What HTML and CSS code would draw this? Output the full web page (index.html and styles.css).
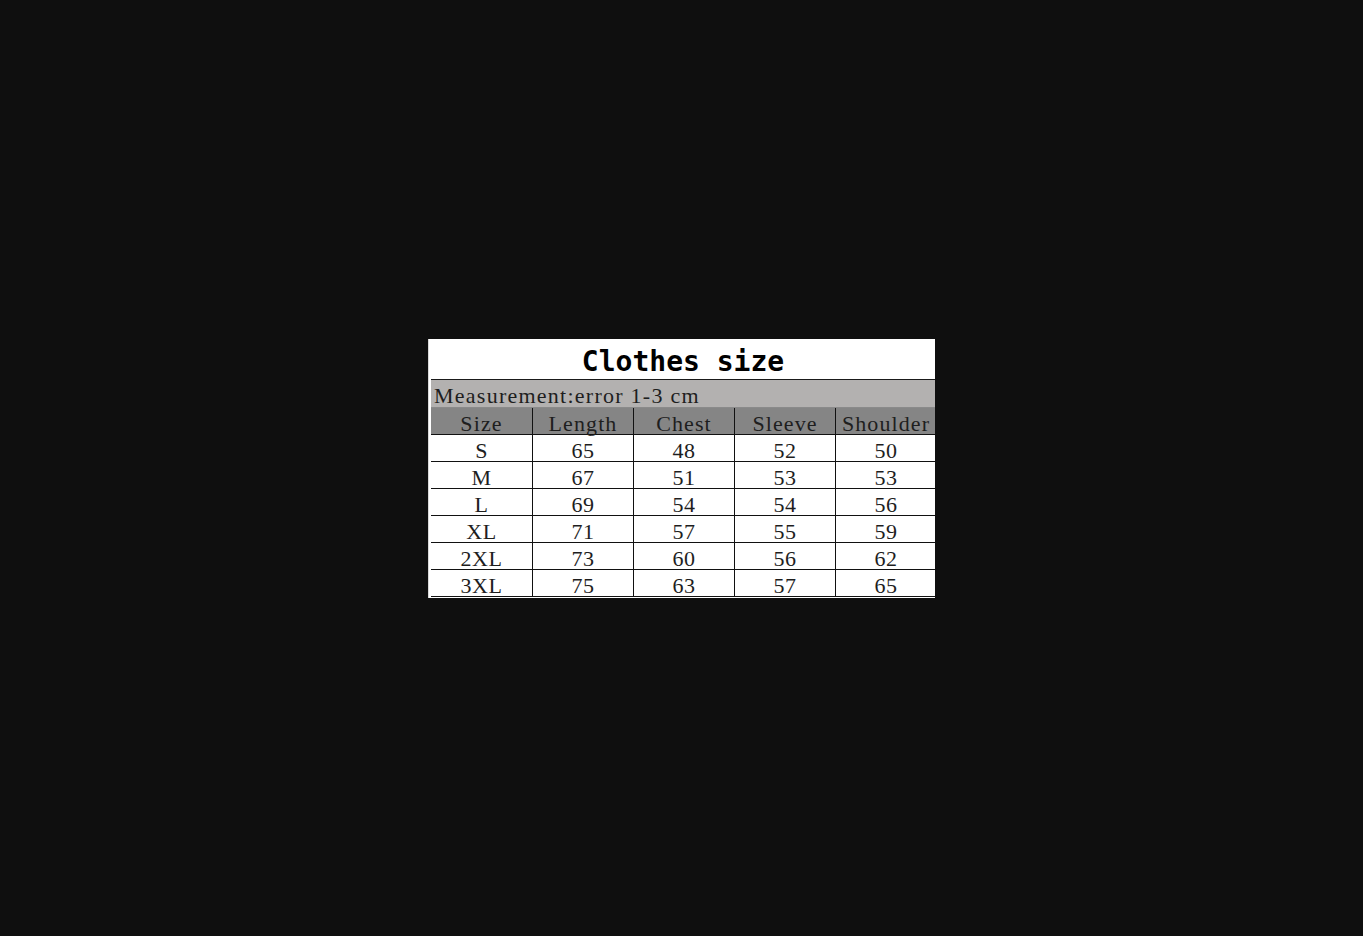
FILE: index.html
```html
<!DOCTYPE html>
<html lang="en">
<head>
<meta charset="utf-8">
<title>Clothes size</title>
<link rel="stylesheet" href="styles.css">
</head>
<body>
<div class="stage">
  <div class="chart">
    <div class="title">Clothes size</div>
    <div class="note">Measurement:error 1-3 cm</div>
    <div class="row head">
      <div class="cell">Size</div><div class="cell">Length</div><div class="cell">Chest</div><div class="cell">Sleeve</div><div class="cell">Shoulder</div>
    </div>
    <div class="row"><div class="cell">S</div><div class="cell">65</div><div class="cell">48</div><div class="cell">52</div><div class="cell">50</div></div>
    <div class="row"><div class="cell">M</div><div class="cell">67</div><div class="cell">51</div><div class="cell">53</div><div class="cell">53</div></div>
    <div class="row"><div class="cell">L</div><div class="cell">69</div><div class="cell">54</div><div class="cell">54</div><div class="cell">56</div></div>
    <div class="row"><div class="cell">XL</div><div class="cell">71</div><div class="cell">57</div><div class="cell">55</div><div class="cell">59</div></div>
    <div class="row"><div class="cell">2XL</div><div class="cell">73</div><div class="cell">60</div><div class="cell">56</div><div class="cell">62</div></div>
    <div class="row"><div class="cell">3XL</div><div class="cell">75</div><div class="cell">63</div><div class="cell">57</div><div class="cell">65</div></div>
  </div>
</div>
</body>
</html>
```
FILE: styles.css
```css
html, body {
  margin: 0;
  padding: 0;
  background: #0f0f0f;
}

.stage {
  width: 1363px;
  height: 936px;
  display: flex;
  align-items: center;
  justify-content: center;
}

.chart {
  width: 507px;
  height: 259px;
  box-sizing: border-box;
  background: #ffffff;
  border-left: 1px solid #d8d8d8;
  padding-left: 1px;
  display: flex;
  flex-direction: column;
  font-family: "Liberation Serif", "Times New Roman", serif;
  color: #1e1e1e;
}

.title {
  height: 41px;
  box-sizing: border-box;
  padding-top: 5px;
  border-bottom: 1px solid #1a1a1a;
  margin-left: 1px;
  text-align: center;
  font-family: "DejaVu Sans Mono", monospace;
  font-weight: bold;
  font-size: 28px;
  line-height: 35px;
  color: #000;
}

.note {
  height: 28px;
  box-sizing: border-box;
  margin-left: 1px;
  padding-left: 3px;
  padding-top: 3px;
  background: #b3b1b0;
  border-bottom: 1px solid #8a8a8a;
  font-size: 22px;
  letter-spacing: 1.25px;
  line-height: 26px;
  white-space: nowrap;
}

.row {
  display: grid;
  grid-template-columns: repeat(5, 101px);
  margin-left: 1px;
  height: 27px;
  box-sizing: border-box;
  border-bottom: 1px solid #111;
}

.row.head {
  background: #858585;
}

.row.head .cell {
  letter-spacing: 1.1px;
}

.cell {
  height: 26px;
  box-sizing: border-box;
  padding-top: 3px;
  text-align: center;
  font-size: 22px;
  letter-spacing: 0.5px;
  line-height: 26px;
  white-space: nowrap;
}

.cell + .cell {
  border-left: 1px solid #111;
}
```
